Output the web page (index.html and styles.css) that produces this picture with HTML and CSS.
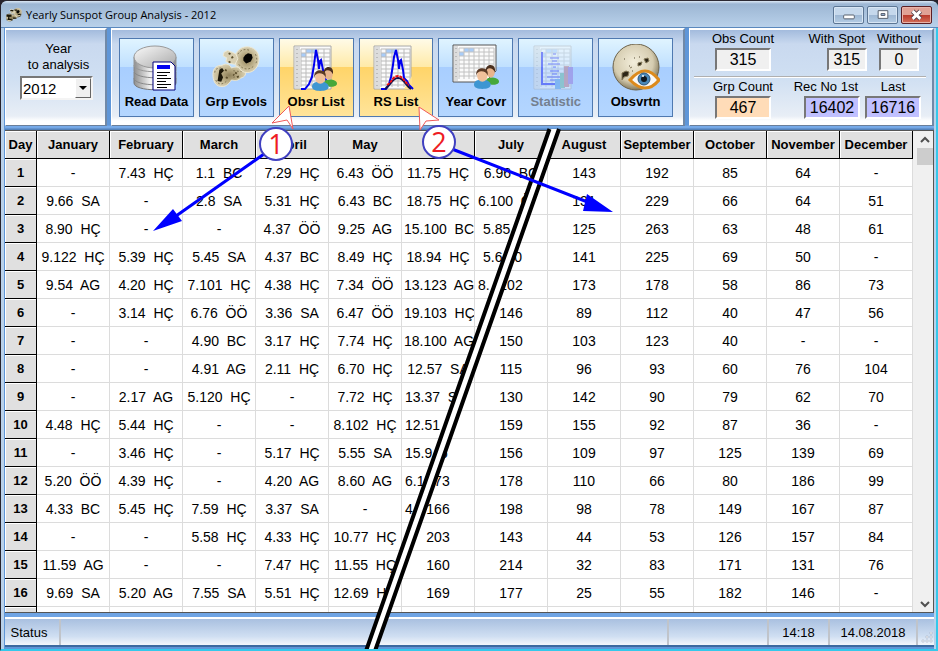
FILE: index.html
```html
<!DOCTYPE html>
<html lang="en">
<head>
  <meta charset="UTF-8">
  <meta name="viewport" content="width=device-width, initial-scale=1.0">
  <title>Yearly Sunspot Group Analysis - 2012</title>
  <link rel="stylesheet" href="styles.css">
</head>
<body>

  <!-- shared icon parts -->
  <svg class="defs" width="0" height="0" aria-hidden="true">
    <defs>
      <linearGradient id="metal" x1="0" x2="1" y1="0" y2="0">
        <stop offset="0" stop-color="#8f8f8f"/>
        <stop offset="0.4" stop-color="#f4f4f4"/>
        <stop offset="1" stop-color="#8a8a8a"/>
      </linearGradient>
      <linearGradient id="metalTop" x1="0" x2="1" y1="0" y2="1">
        <stop offset="0" stop-color="#fafafa"/>
        <stop offset="1" stop-color="#a8a8a8"/>
      </linearGradient>
      <radialGradient id="moon" cx="0.45" cy="0.4" r="0.6">
        <stop offset="0" stop-color="#f3eedb"/>
        <stop offset="0.7" stop-color="#d5ccb0"/>
        <stop offset="1" stop-color="#857a5c"/>
      </radialGradient>
      <radialGradient id="spot">
        <stop offset="0" stop-color="#8d7f5a"/>
        <stop offset="0.4" stop-color="#b0a27b"/>
        <stop offset="0.7" stop-color="#c6ba96"/>
        <stop offset="1" stop-color="#d8cfb2"/>
      </radialGradient>
      <symbol id="sheet" viewBox="0 0 48 48">
        <path d="M2 2h37v43H2z" fill="#fbfbfb" stroke="#a8a8a8"/>
        <path d="M3 3h5v41H3z" fill="#dcdcdc"/>
        <path d="M9 9h5v4H9zM14 5h11v4H14z" fill="#a8ccf8"/>
        <path d="M9 5h29M9 9h29M9 13h29M9 17h29M9 21h29M9 25h29M9 29h29M9 33h29M9 37h29M9 41h29M9 5v38M14 5v38M20 5v38M26 5v38M32 5v38M38 5v38" fill="none" stroke="#bbbbbb"/>
        <path d="M5 5v38" stroke="#9a9a9a" stroke-dasharray="1 3"/>
      </symbol>
      <symbol id="people" viewBox="0 0 24 24">
        <path d="M11 18c0-4 3-5 6-5s7 1 7 4c0 2-3 3-7 3z" fill="#46a83a"/>
        <ellipse cx="16" cy="8" rx="4" ry="5" fill="#e8b48c"/>
        <path d="M11 8c0-5 2-7 5-7s5 3 4 7c-1-3-3-4-5-4s-3 2-4 4z" fill="#4a2f1e"/>
        <path d="M0 20c0-4 3-5 8-5s8 2 8 5c0 3-4 4-8 4s-8-1-8-4z" fill="#3e96d2"/>
        <ellipse cx="8" cy="11" rx="5" ry="6" fill="#f0c09a"/>
        <path d="M2 11c0-5 2-7 6-7s6 3 5 7c-1-3-3-4-6-4-2 0-4 1-5 4z" fill="#5b3a26"/>
      </symbol>
      <symbol id="evols" viewBox="0 0 52 48">
        <path d="M1 31c0-7 4-10 10-10 5-3 9 0 10 3 5-2 11-1 14 2 3 4 1 8-4 9-4 4-8 2-10 2-3 5-7 8-12 7-6-1-8-7-8-13z" fill="url(#spot)" stroke="#efe9d4"/>
        <path d="M25 14c0-8 6-13 13-13s13 5 13 13-5 15-13 15c-4 0-7-2-9-6l-3-1z" fill="url(#spot)" stroke="#efe9d4"/>
        <path d="M13 7l4-2 5 2 4 2 2 5-3 6-6-1-4-2 1-4-4-2z" fill="#d8cfb2" stroke="#efe9d4"/>
        <path d="M28 9c3-5 8-6 13-4M29 20c4 6 12 7 17 1M47 9c2 4 2 8 0 11M4 37c3 6 8 5 12 1M3 29c0-4 3-5 7-5M23 27l9 1M23 34l6-1" fill="none" stroke="#7f7351" stroke-dasharray="2 2"/>
        <path d="M36 10l3-2 4 1 1 4-2 4-5 2-3-3v-3z" fill="#060503"/>
        <path d="M8 26l3-2 2 3-3 3 2 4-2 5-4-1 1-6z" fill="#1c170a"/>
        <path d="M14 26l2 1M15 34l2 1M18 8l2 1M21 13l2-1M18 17l2 1M25 29l2 1M27 34l2-1M23 31l1 1" stroke="#5a4d2c" stroke-width="2"/>
      </symbol>
    </defs>
  </svg>

  <div class="window">
    <header class="titlebar">
      <svg class="app-icon" viewBox="0 0 52 48"><rect x="1" y="20" width="22" height="24" rx="9" fill="#2b2512"/><rect x="24" y="3" width="26" height="28" rx="11" fill="#2b2512"/><use href="#evols"/><path d="M4 24h12v4H4zM5 38h14M28 8h8M38 22h10M14 10h10M22 34h12" stroke="#1a1608" stroke-width="4"/></svg>
      <h1>Yearly Sunspot Group Analysis - 2012</h1>
      <div class="win-buttons">
        <button type="button" aria-label="Minimize"><svg viewBox="0 0 30 16"><rect x="10" y="8" width="11" height="4" rx="1" fill="#fff" stroke="#555d6b"/></svg></button>
        <button type="button" aria-label="Maximize"><svg viewBox="0 0 30 16"><path d="M10.500 3.500h10v8h-10z" fill="#fff" stroke="#555d6b"/><path d="M13.500 6.500h4v2h-4z" fill="#9ab4d4" stroke="#555d6b"/></svg></button>
        <button type="button" class="close" aria-label="Close"><svg viewBox="0 0 30 16"><path d="M11 4l8 8M19 4l-8 8" stroke="#4d3b48" stroke-width="5"/><path d="M11 4l8 8M19 4l-8 8" stroke="#fff" stroke-width="3"/></svg></button>
      </div>
    </header>

    <div class="toolbar">
      <section class="panel year-panel">
        <label for="year">Year<br>to analysis</label>
        <div class="combo">
          <select id="year"><option>2012</option></select>
          <span class="combo-arrow"></span>
        </div>
      </section>

      <nav class="panel buttons-panel">
        <button type="button" class="tool">
          <svg viewBox="0 0 48 48">
            <path d="M2 34v5c0 9 42 9 42 0v-5z" fill="url(#metal)" stroke="#777"/>
            <path d="M2 28v6c0 9 42 9 42 0v-6z" fill="url(#metal)" stroke="#888"/>
            <path d="M2 21v6c0 9 42 9 42 0v-6z" fill="url(#metal)" stroke="#888"/>
            <path d="M2 13v8c0 9 42 9 42 0v-8z" fill="url(#metal)" stroke="#999"/>
            <ellipse cx="23" cy="13" rx="21" ry="11" fill="url(#metalTop)" stroke="#999"/>
            <path d="M21 18h18l4 4v24H21z" fill="#fff" stroke="#00007c"/>
            <path d="M25 21h13v4H25z" fill="#0000f0"/>
            <path d="M25 28.500h13M25 31.500h10M25 34.500h14M25 37.500h9M25 40.500h14M25 43.500h10" stroke="#000"/>
          </svg>
          Read Data
        </button>
        <button type="button" class="tool">
          <svg viewBox="0 0 52 48"><use href="#evols"/></svg>
          Grp Evols
        </button>
        <button type="button" class="tool gold">
          <svg viewBox="0 0 48 48">
            <use href="#sheet" width="48" height="48"/>
            <path d="M9 45h4l4-5 3-7 2-12 1-8 1-7 2 10 1 9 1-8 1-1 2 10 1 6 2 4 2 2 2 4" fill="none" stroke="#0000f0" stroke-width="2"/>
            <use href="#people" x="20" y="22" width="25" height="25"/>
          </svg>
          Obsr List
        </button>
        <button type="button" class="tool gold">
          <svg viewBox="0 0 48 48">
            <use href="#sheet" width="48" height="48"/>
            <path d="M40 32l-8 13h8z" fill="#ffe08a"/>
            <path d="M9 45h5l3-5 2-7 2-12 1-8 2-7 2 10 1 9 1-8 1-1 2 10 1 8 3 3 2 4 4 4" fill="none" stroke="#0000f0" stroke-width="2"/>
            <path d="M13 45c5-3 7-11 13-11s8 8 13 11" fill="none" stroke="#10104c" stroke-width="2"/>
            <path d="M15 41c5-3 6-9 11-9s7 7 11 9" fill="none" stroke="#f01010" stroke-width="2" stroke-dasharray="3 1"/>
          </svg>
          RS List
        </button>
        <button type="button" class="tool">
          <svg viewBox="0 0 48 48">
            <path d="M1 1h43v26l-11 11H1z" fill="#fbfbfb" stroke="#555"/>
            <path d="M2 2h4v35H2z" fill="#dcdcdc"/>
            <path d="M7 8h5v4H7zM12 4h10v4H12z" fill="#a8ccf8"/>
            <path d="M7 4h35M7 8h35M7 12h35M7 16h35M7 20h35M7 24h35M7 28h30M7 32h28M7 4v31M12 4v31M17 4v31M22 4v31M27 4v31M32 4v31M37 4v28M42 4v22" fill="none" stroke="#c2c2c2"/>
            <path d="M4 4v32" stroke="#9a9a9a" stroke-dasharray="1 3"/>
            <use href="#people" x="22" y="20" width="25" height="25"/>
          </svg>
          Year Covr
        </button>
        <button type="button" class="tool" disabled>
          <svg viewBox="0 0 48 48">
            <use href="#sheet" width="48" height="48"/>
            <path d="M10 8v32h20" fill="none" stroke="#0000f0" stroke-width="2"/>
            <path d="M21 10h3M18 14h9M20 17h5M16 20h12M21 23h3M18 27h9M20 30h5M15 33h13M18 36h8" stroke="#0000f0"/>
            <path d="M23 35h6v10h-6z" fill="#3e8ee0"/>
            <path d="M28 29h5v15h-5z" fill="#5cb08c"/>
            <path d="M32 22h5v21h-5z" fill="#c46868"/>
            <path d="M36 23h5v17h-5z" fill="#9060d0"/>
          </svg>
          Statistic
        </button>
        <button type="button" class="tool">
          <svg viewBox="0 0 48 48">
            <circle cx="24" cy="23" r="23" fill="url(#moon)" stroke="#6c624a"/>
            <path d="M32 15l4-1 1 3-3 2zM26 19l4-1-1 3-3 1zM10 29l4-2 3 1-1 4-4 1-2 3zM18 24l2-1" fill="#2c2617" stroke="#84795a"/>
            <path d="M12 15h1M22 14h1M27 13h1M20 27h1M17 22h1" stroke="#5b5138"/>
            <path d="M18 36c5-6 9-9 15-9s10 4 14 9c-4 5-8 8-14 8s-10-3-15-8z" fill="#f8f8f8" stroke="#dc8a1c" stroke-width="3"/>
            <circle cx="32" cy="35" r="6" fill="#4b88b8" stroke="#2d5578"/>
            <circle cx="32" cy="35" r="3" fill="#10181f"/>
            <circle cx="31" cy="32" r="1" fill="#fff"/>
          </svg>
          Obsvrtn
        </button>
      </nav>

      <section class="panel stats-panel">
        <div class="stats">
          <div class="stat first"><label for="obs">Obs Count</label><output id="obs" class="wide">315</output></div>
          <div class="stat right"><label for="with">With Spot</label><output id="with">315</output></div>
          <div class="stat"><label for="without">Without</label><output id="without">0</output></div>
        </div>
        <hr>
        <div class="stats close-set">
          <div class="stat first"><label for="grp">Grp Count</label><output id="grp" class="wide peach">467</output></div>
          <div class="stat right"><label for="rec">Rec No 1st</label><output id="rec" class="wide violet">16402</output></div>
          <div class="stat"><label for="last">Last</label><output id="last" class="wide violet">16716</output></div>
        </div>
      </section>
    </div>

    <main class="grid-area">
      <div class="grid-scroll">
        <table>
          <thead>
            <tr><th class="day">Day</th><th>January</th><th>February</th><th>March</th><th>April</th><th>May</th><th></th><th>July</th><th>August</th><th>September</th><th>October</th><th>November</th><th>December</th></tr>
          </thead>
          <tbody>
            <tr><th>1</th><td>-</td><td>7.43  HÇ</td><td>1.1  BC</td><td>7.29  HÇ</td><td>6.43  ÖÖ</td><td>11.75  HÇ</td><td>6.96  BC</td><td>143</td><td>192</td><td>85</td><td>64</td><td>-</td></tr>
            <tr><th>2</th><td>9.66  SA</td><td>-</td><td>2.8  SA</td><td>5.31  HÇ</td><td>6.43  BC</td><td>18.75  HÇ</td><td class="cut"><span>6.100  Ö</span></td><td>131</td><td>229</td><td>66</td><td>64</td><td>51</td></tr>
            <tr><th>3</th><td>8.90  HÇ</td><td>-</td><td>-</td><td>4.37  ÖÖ</td><td>9.25  AG</td><td>15.100  BC</td><td class="cut near"><span>5.85</span></td><td>125</td><td>263</td><td>63</td><td>48</td><td>61</td></tr>
            <tr><th>4</th><td>9.122  HÇ</td><td>5.39  HÇ</td><td>5.45  SA</td><td>4.37  BC</td><td>8.49  HÇ</td><td>18.94  HÇ</td><td class="cut near"><span>5.6   0</span></td><td>141</td><td>225</td><td>69</td><td>50</td><td>-</td></tr>
            <tr><th>5</th><td>9.54  AG</td><td>4.20  HÇ</td><td>7.101  HÇ</td><td>4.38  HÇ</td><td>7.34  ÖÖ</td><td>13.123  AG</td><td class="cut"><span>8.</span>102</td><td>173</td><td>178</td><td>58</td><td>86</td><td>73</td></tr>
            <tr><th>6</th><td>-</td><td>3.14  HÇ</td><td>6.76  ÖÖ</td><td>3.36  SA</td><td>6.47  ÖÖ</td><td>19.103  HÇ</td><td>146</td><td>89</td><td>112</td><td>40</td><td>47</td><td>56</td></tr>
            <tr><th>7</th><td>-</td><td>-</td><td>4.90  BC</td><td>3.17  HÇ</td><td>7.74  HÇ</td><td>18.100  AG</td><td>150</td><td>103</td><td>123</td><td>40</td><td>-</td><td>-</td></tr>
            <tr><th>8</th><td>-</td><td>-</td><td>4.91  AG</td><td>2.11  HÇ</td><td>6.70  HÇ</td><td>12.57  SA</td><td>115</td><td>96</td><td>93</td><td>60</td><td>76</td><td>104</td></tr>
            <tr><th>9</th><td>-</td><td>2.17  AG</td><td>5.120  HÇ</td><td>-</td><td>7.72  HÇ</td><td class="cut"><span>13.37  S</span></td><td>130</td><td>142</td><td>90</td><td>79</td><td>62</td><td>70</td></tr>
            <tr><th>10</th><td>4.48  HÇ</td><td>5.44  HÇ</td><td>-</td><td>-</td><td>8.102  HÇ</td><td class="cut"><span>12.51</span></td><td>159</td><td>155</td><td>92</td><td>87</td><td>36</td><td>-</td></tr>
            <tr><th>11</th><td>-</td><td>3.46  HÇ</td><td>-</td><td>5.17  HÇ</td><td>5.55  SA</td><td class="cut"><span>15.9  6</span></td><td>156</td><td>109</td><td>97</td><td>125</td><td>139</td><td>69</td></tr>
            <tr><th>12</th><td>5.20  ÖÖ</td><td>4.39  HÇ</td><td>-</td><td>4.20  AG</td><td>8.60  AG</td><td class="cut"><span>6.1</span>173</td><td>178</td><td>110</td><td>66</td><td>80</td><td>186</td><td>99</td></tr>
            <tr><th>13</th><td>4.33  BC</td><td>5.45  HÇ</td><td>7.59  HÇ</td><td>3.37  SA</td><td>-</td><td class="cut"><span>4</span>166</td><td>198</td><td>98</td><td>78</td><td>149</td><td>167</td><td>87</td></tr>
            <tr><th>14</th><td>-</td><td>-</td><td>5.58  HÇ</td><td>4.33  HÇ</td><td>10.77  HÇ</td><td>203</td><td>143</td><td>44</td><td>53</td><td>126</td><td>157</td><td>84</td></tr>
            <tr><th>15</th><td>11.59  AG</td><td>-</td><td>-</td><td>7.47  HÇ</td><td>11.55  HÇ</td><td>160</td><td>214</td><td>32</td><td>83</td><td>171</td><td>131</td><td>76</td></tr>
            <tr><th>16</th><td>9.69  SA</td><td>5.20  AG</td><td>7.55  SA</td><td>5.51  HÇ</td><td>12.69  HÇ</td><td>169</td><td>177</td><td>25</td><td>55</td><td>182</td><td>146</td><td>-</td></tr>
            <tr><th></th><td></td><td></td><td></td><td></td><td></td><td></td><td></td><td></td><td></td><td></td><td></td><td></td></tr>
          </tbody>
        </table>
      </div>
      <div class="scrollbar">
        <button type="button" aria-label="Scroll up"><svg viewBox="0 0 16 16"><path d="M4 10l4-4 4 4" fill="none" stroke="#505050" stroke-width="2"/></svg></button>
        <div class="thumb"></div>
        <button type="button" aria-label="Scroll down"><svg viewBox="0 0 16 16"><path d="M4 6l4 4 4-4" fill="none" stroke="#505050" stroke-width="2"/></svg></button>
      </div>
    </main>

    <footer class="statusbar">
      <div class="s-label">Status</div>
      <div class="s-fill"></div>
      <div class="s-blank"></div>
      <div class="s-time">14:18</div>
      <div class="s-date">14.08.2018</div>
      <svg class="grip" viewBox="0 0 12 12"><path d="M9 0h2v2H9zM9 4h2v2H9zM5 4h2v2H5zM9 8h2v2H9zM5 8h2v2H5zM1 8h2v2H1z" fill="#fff" stroke="#9aa6b8" stroke-width="0.500"/></svg>
    </footer>

    <!-- call-outs drawn over the window -->
    <svg class="notes" width="938" height="651" viewBox="0 0 938 651">
      <path d="M549 129L367 651h9L559 129z" fill="#fff"/>
      <path d="M549.500 129L468 360 366 651M559 129L477.500 360 375 651" fill="none" stroke="#000" stroke-width="4"/>
      <path d="M264 154L176 216M452 149L590 203" stroke="#0000ff" stroke-width="3"/>
      <path d="M153 231l20-22 9 12zM613 212l-26-18-4 17z" fill="#0000ff"/>
      <path d="M289 106l-17 17 15-3 6 9zM419 107l20 13-13 1-6 9z" fill="#fff" stroke="#f05a5a"/>
      <circle cx="276" cy="144" r="16" fill="#fff" stroke="#4040c0" stroke-width="2"/>
      <circle cx="439" cy="142" r="16" fill="#fff" stroke="#4040c0" stroke-width="2"/>
      <text x="276" y="154">1</text>
      <text x="439" y="152">2</text>
    </svg>
  </div>

</body>
</html>
```

FILE: styles.css
```css
* {
  box-sizing: border-box;
}

body {
  margin: 0;
  background-color: #26222c;
  color: #000;
  font-family: "Liberation Sans", Arial, sans-serif;
  font-size: 13px;
}

button {
  font-family: inherit;
  padding: 0;
}

.defs {
  position: absolute;
}

.window {
  position: relative;
  display: flex;
  flex-direction: column;
  height: 100vh;
  padding: 1px 4px 2px;
  background: linear-gradient(to right, #b9d1ea 3px, #5f96d8 3px, #5f96d8 calc(100% - 4px), #b9d1ea calc(100% - 4px), #b9d1ea calc(100% - 2px), #35c8ea calc(100% - 2px));
  border-top: 1px solid #2c2a33;
  border-left: 1px solid #26222c;
  border-bottom: 2px solid #35c8ea;
  border-radius: 7px 7px 0 0;
  overflow: hidden;
}

/* title bar */
.titlebar {
  display: flex;
  align-items: center;
  gap: 4px;
  height: 27px;
  margin: -1px -4px 0;
  padding: 1px 6px 0 5px;
  background: linear-gradient(#dce8f5, #9cb6d3 3px, #b9d1ea);
  border-bottom: 1px solid #5a88bd;
}

.app-icon {
  width: 16px;
  height: 16px;
}

.titlebar h1 {
  flex: 1;
  margin: 0;
  font: 11px "Open Sans", sans-serif;
}

.win-buttons {
  display: flex;
  gap: 3px;
}

.win-buttons button {
  width: 31px;
  height: 18px;
  border: 1px solid #5c7694;
  border-radius: 2px;
  background: linear-gradient(#c5d8ec 50%, #9db7d3 50%, #b4cce4);
  box-shadow: inset 0 0 0 1px #d8e6f4;
}

.win-buttons .close {
  border-color: #5c1f24;
  background: linear-gradient(#e0a195 50%, #b8382a 50%, #d4705a);
  box-shadow: inset 0 0 0 1px #e8b4aa;
}

.win-buttons svg {
  display: block;
  width: 29px;
  height: 16px;
}

/* toolbar */
.toolbar {
  display: flex;
  gap: 4px;
  height: 102px;
  padding-bottom: 4px;
  background: linear-gradient(#5f96d8 97px, #7fb2f0 99px, #4a78b0);
}

.panel {
  border: solid #fff;
  border-width: 2px 0 1px 1px;
  border-bottom-color: #6a7f9a;
  border-right: 2px solid #7089a8;
  background: linear-gradient(#a3bbdd, #c9d9ef 14px, #cfdff2 50%, #e8eef6 86px, #fff 91px);
}

.year-panel {
  width: 102px;
  padding: 11px 6px 0 14px;
  text-align: center;
}

.year-panel label {
  display: block;
  padding-right: 2px;
  line-height: 16px;
}

.combo {
  position: relative;
  height: 24px;
  margin-top: 3px;
  width: 73px;
}

.combo select {
  appearance: none;
  width: 100%;
  height: 100%;
  padding: 0 1px;
  border: 2px solid;
  border-color: #777 #f4f4f4 #f4f4f4 #777;
  border-radius: 0;
  background-color: #fff;
  color: #000;
  font-family: inherit;
  font-size: 15px;
}

.combo-arrow {
  position: absolute;
  top: 2px;
  right: 2px;
  width: 16px;
  height: 20px;
  border: 1px solid;
  border-color: #fff #666 #666 #fff;
  background-color: #f0f0f0;
  pointer-events: none;
}

.combo-arrow::after {
  content: "";
  position: absolute;
  top: 7px;
  left: 3px;
  border: 4px solid transparent;
  border-top-color: #000;
  border-bottom: 0;
}

.buttons-panel {
  flex: 1;
  display: flex;
  gap: 5px;
  padding: 8px 10px 8px 7px;
}

.tool {
  display: flex;
  flex-direction: column;
  align-items: center;
  justify-content: space-between;
  flex: 1;
  height: 79px;
  padding: 5px 0 6px;
  border: 1px solid #4f79b0;
  background: linear-gradient(#e0f4ff, #c0e0ff 36%, #a8ceff 36%, #b4d6ff);
  color: #000;
  font-size: 13px;
  font-weight: bold;
  line-height: 16px;
  white-space: nowrap;
}

.tool svg {
  width: 48px;
  height: 48px;
}

.tool.gold {
  background: linear-gradient(#fffbe8, #ffeaa8 36%, #ffd468 36%, #ffe49a);
}

.tool:disabled {
  color: #74808f;
}

.tool:disabled svg {
  opacity: 0.4;
}

.stats-panel {
  width: 245px;
}

.stats {
  display: flex;
  gap: 10px;
  padding: 1px 11px 0 21px;
}

.stats.close-set {
  gap: 5px;
}

.stat {
  display: flex;
  flex-direction: column;
  align-items: center;
}

.stat.first {
  width: 64px;
  margin-right: auto;
}

.stat.right {
  align-items: flex-end;
}

.stat.right label {
  padding-right: 2px;
}

.stat label {
  line-height: 16px;
  white-space: nowrap;
}

.stat output {
  width: 40px;
  height: 23px;
  margin-top: 1px;
  border: 2px solid;
  border-color: #777 #fff #fff #777;
  background-color: #f0f0f0;
  font-size: 16px;
  line-height: 20px;
  text-align: center;
}

.stat .wide {
  width: 56px;
}

.stat .peach {
  background-color: #ffdcb8;
}

.stat .violet {
  background-color: #c0c0ff;
}

.stats-panel hr {
  margin: 5px 6px 0 4px;
  border: 0;
  border-top: 1px solid #b0b0b0;
  border-bottom: 1px solid #fff;
}

/* data grid */
.grid-area {
  flex: 1;
  display: flex;
  min-height: 0;
  border: 1px solid #555;
  border-width: 1px 1px 1px 0;
  background-color: #f0f0f0;
}

.grid-scroll {
  flex: 1;
  overflow: hidden;
  margin-right: 4px;
}

table {
  width: 100%;
  table-layout: fixed;
  border-collapse: separate;
  border-spacing: 0;
  background-color: #fff;
}

th,
td {
  height: 28px;
  padding: 0 2px;
  overflow: hidden;
  text-align: center;
  white-space: pre;
}

th {
  border: solid #000;
  border-width: 0 1px 1px 0;
  background-color: #e0e0e0;
  box-shadow: inset 1px 1px #fff;
  font-size: 13px;
}

th.day {
  width: 32px;
}

td {
  border: solid #dcdcdc;
  border-width: 0 1px 1px 0;
  font-size: 14px;
}

/* cells where two screens meet at the tear line */
.cut {
  position: relative;
}

.cut span {
  position: absolute;
  top: 0;
  left: 3px;
  line-height: 28px;
}

.cut.near span {
  left: 8px;
}

.scrollbar {
  display: flex;
  flex-direction: column;
  width: 16px;
}

.scrollbar button {
  height: 17px;
  border: 0;
  background: none;
}

.scrollbar svg {
  display: block;
  width: 16px;
  height: 16px;
}

.thumb {
  height: 17px;
  margin-bottom: auto;
  background-color: #cdcdcd;
}

/* status bar */
.statusbar {
  display: flex;
  height: 34px;
  padding-top: 2px;
  border-top: 4px solid #6fa4e4;
  border-bottom: 2px solid #3c6aa0;
  background: linear-gradient(#fff 2px, #a9c0e0 2px, #d0dff2 70%, #f4f7fb);
  line-height: 28px;
}

.statusbar div {
  border-right: 2px solid;
  border-right-color: #c0c4ca;
  text-align: center;
}

.s-label {
  width: 56px;
  padding-right: 6px;
}

.s-fill {
  flex: 1;
}

.s-blank {
  width: 100px;
}

.s-time {
  width: 61px;
}

.s-date {
  width: 88px;
}

.grip {
  width: 12px;
  height: 12px;
  margin: auto 1px 1px 3px;
}

.notes {
  position: absolute;
  top: -1px;
  left: -1px;
  pointer-events: none;
}

.notes text {
  fill: #ee1c24;
  font: 27px "Open Sans", sans-serif;
  text-anchor: middle;
}
```
